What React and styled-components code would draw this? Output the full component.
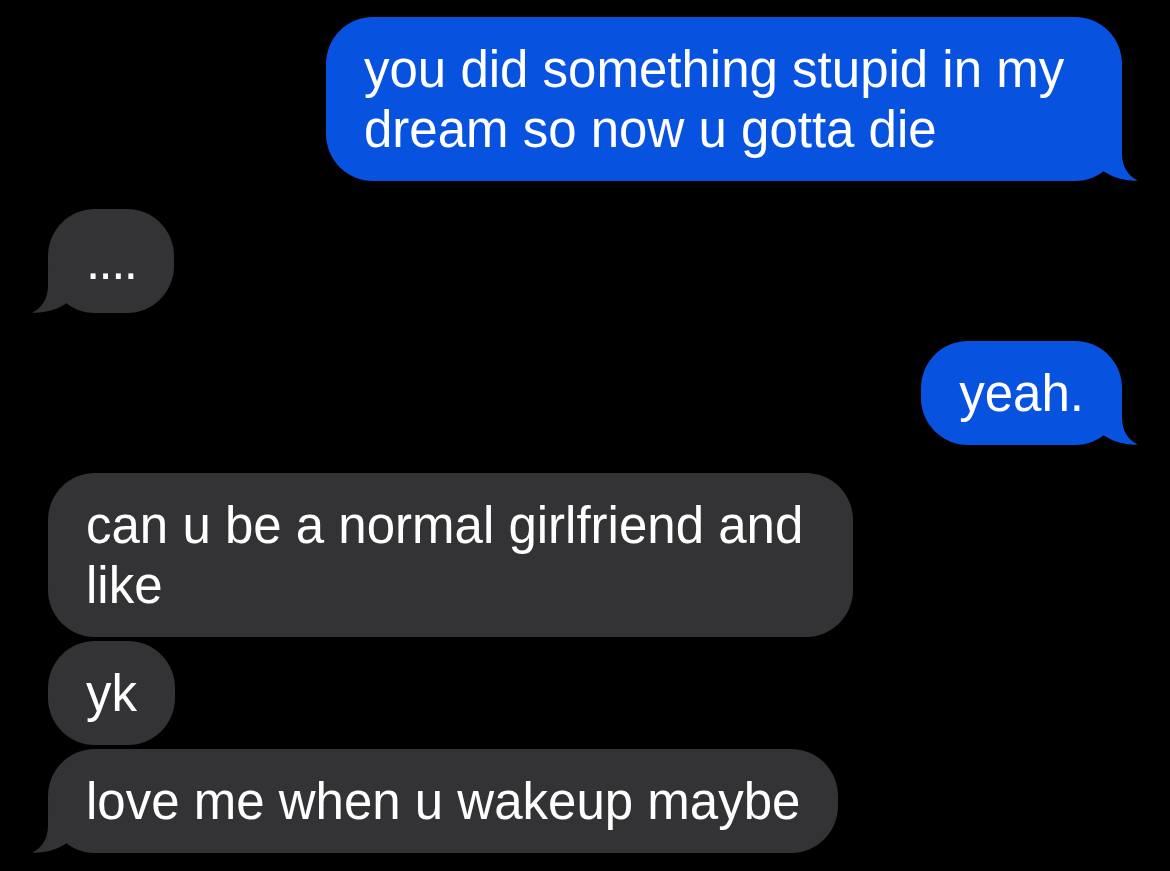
import React from "react";
import styled, { createGlobalStyle } from "styled-components";

const Global = createGlobalStyle`
  html, body {
    margin: 0;
    padding: 0;
    background: #000;
  }
  body {
    font-family: "Liberation Sans", Arial, sans-serif;
    -webkit-font-smoothing: antialiased;
  }
`;

const BLUE = "#0852E0";
const GRAY = "#333335";

const Thread = styled.main`
  box-sizing: border-box;
  width: 1170px;
  min-height: 871px;
  padding: 17px 48px 0;
  display: flex;
  flex-direction: column;
  gap: 28px;
  background: #000;
  overflow: hidden;
`;

const Group = styled.section`
  display: flex;
  flex-direction: column;
  gap: 4px;
  align-items: ${(p) => (p.$mine ? "flex-end" : "flex-start")};
`;

const Bubble = styled.div`
  position: relative;
  box-sizing: border-box;
  max-width: ${(p) => p.$max || 805}px;
  padding: 23px 38px 21px;
  border-radius: 47px;
  background: ${(p) => (p.$mine ? BLUE : GRAY)};
  color: #fff;
  font-size: 51px;
  line-height: 60px;
  letter-spacing: ${(p) => (p.$tight ? "-1.6px" : "0")};
`;

const TailSvg = styled.svg`
  position: absolute;
  bottom: 0;
  width: 52px;
  height: 44px;
  ${(p) =>
    p.$mine
      ? "right: -16px;"
      : "left: -16px; transform: scaleX(-1);"}
  overflow: visible;
`;

function Tail({ mine }) {
  return (
    <TailSvg $mine={mine} viewBox="0 0 52 44" aria-hidden="true">
      <path
        d="M36 0 L36 16 C36 29 41 38 51.5 43.6 C44 44.6 25 41.5 15 32 L0 20 L0 0 Z"
        fill={mine ? BLUE : GRAY}
      />
    </TailSvg>
  );
}

function Message({ mine, tail, max, tight, children }) {
  return (
    <Bubble $mine={mine} $max={max} $tight={tight}>
      {children}
      {tail && <Tail mine={mine} />}
    </Bubble>
  );
}

export default function App() {
  return (
    <>
      <Global />
      <Thread>
        <Group $mine>
          <Message mine tail max={796}>
            you did something stupid in my dream so now u gotta die
          </Message>
        </Group>
        <Group>
          <Message tail tight>
            ....
          </Message>
        </Group>
        <Group $mine>
          <Message mine tail>
            yeah.
          </Message>
        </Group>
        <Group>
          <Message max={805}>can u be a normal girlfriend and like</Message>
          <Message>yk</Message>
          <Message tail>love me when u wakeup maybe</Message>
        </Group>
      </Thread>
    </>
  );
}
